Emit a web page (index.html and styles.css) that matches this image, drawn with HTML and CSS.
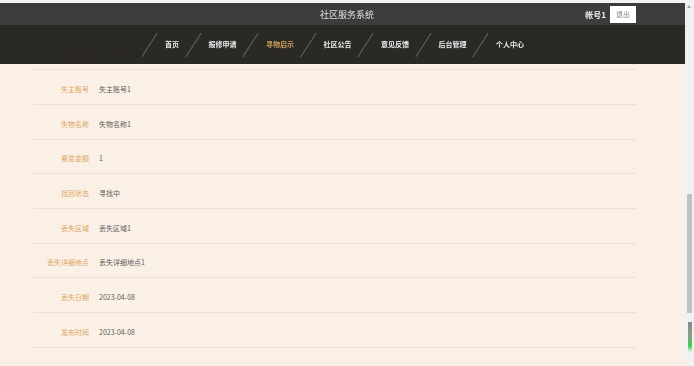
FILE: index.html
```html
<!DOCTYPE html>
<html lang="zh-CN">
<head>
    <meta charset="UTF-8">
    <meta name="viewport" content="width=device-width, initial-scale=1.0">
    <title>社区服务系统 - 寻物启示详情</title>
    <link rel="stylesheet" href="styles.css">
</head>
<body>
    <div class="header">
        <div class="topbar">
            <div class="title">社区服务系统</div>
            <div class="user">
                <span class="user-name">帐号1</span>
                <button class="logout">退出</button>
            </div>
        </div>
        <ul class="nav">
            <li class="nav-item"><a href="#">首页</a></li>
            <li class="nav-item"><a href="#">报修申请</a></li>
            <li class="nav-item active"><a href="#">寻物启示</a></li>
            <li class="nav-item"><a href="#">社区公告</a></li>
            <li class="nav-item"><a href="#">意见反馈</a></li>
            <li class="nav-item"><a href="#">后台管理</a></li>
            <li class="nav-item"><a href="#">个人中心</a></li>
        </ul>
    </div>

    <div class="detail">
        <div class="row"><span class="label">失物编号</span><span class="value">1680933891</span></div>
        <div class="row"><span class="label">联系电话</span><span class="value">11111111111</span></div>
        <div class="row"><span class="label">失主账号</span><span class="value">失主账号1</span></div>
        <div class="row"><span class="label">失物名称</span><span class="value">失物名称1</span></div>
        <div class="row"><span class="label">悬赏金额</span><span class="value">1</span></div>
        <div class="row"><span class="label">找回状态</span><span class="value">寻找中</span></div>
        <div class="row"><span class="label">丢失区域</span><span class="value">丢失区域1</span></div>
        <div class="row"><span class="label">丢失详细地点</span><span class="value">丢失详细地点1</span></div>
        <div class="row"><span class="label">丢失日期</span><span class="value">2023-04-08</span></div>
        <div class="row"><span class="label">发布时间</span><span class="value">2023-04-08</span></div>
    </div>

    <div class="scrollbar">
        <span class="scroll-arrow"></span>
        <span class="scroll-thumb"></span>
        <span class="scroll-meter"></span>
    </div>
</body>
</html>
```

FILE: styles.css
```css
html, body {
    margin: 0;
    overflow: hidden;
}
body {
    font-family: "Noto Sans CJK SC", "Liberation Sans", sans-serif;
    background-color: #fbf0e6;
    width: 685px;
    height: 366px;
}

/* header */
.header {
    position: fixed;
    top: 0;
    left: 0;
    width: 685px;
    border-top: 3px solid #f2f2f2;
    z-index: 2;
}
.topbar {
    display: grid;
    grid-template-columns: 1fr auto 1fr;
    align-items: center;
    height: 22px;
    padding: 0 49px 0 58px;
    background-color: #3c3c3c;
}
.title {
    grid-column: 2;
    color: #e2e2e2;
    font-size: 9px;
}
.user {
    grid-column: 3;
    justify-self: end;
    display: flex;
    align-items: center;
    gap: 4px;
}
.user-name {
    color: #f0f0f0;
    font-size: 8px;
    font-weight: bold;
}
.logout {
    width: 26px;
    height: 17px;
    padding: 0;
    border: none;
    background-color: #fff;
    color: #888;
    font-family: inherit;
    font-size: 7px;
}
.nav {
    display: flex;
    align-items: center;
    height: 39px;
    margin: 0;
    padding: 0 0 0 142px;
    list-style: none;
    background-color: rgba(30, 28, 25, 0.94);
}
.nav-item {
    display: flex;
    align-items: center;
    padding: 0 6.5px 0 7px;
}
.nav-item::before {
    content: "";
    width: 0;
    height: 24px;
    border-left: 1px solid #6e6c69;
    transform: skewX(-33deg);
    margin-right: 15px;
}
.nav-item a {
    color: #ececec;
    font-size: 7px;
    font-weight: bold;
    text-decoration: none;
    line-height: 1;
}
.nav-item.active a {
    color: #cf9f5c;
}

/* detail rows */
.detail {
    width: 603px;
    margin-left: 33px;
    padding-top: 1px;
}
.row {
    display: grid;
    grid-template-columns: 56px 1fr;
    column-gap: 10px;
    align-items: center;
    box-sizing: border-box;
    height: 34.67px;
    padding-top: 4px;
    border-bottom: 1px solid #e9dfd3;
    font-size: 7px;
}
.label {
    text-align: right;
    color: #dba663;
}
.value {
    color: #5c5c5c;
}

/* page scrollbar */
.scrollbar {
    position: fixed;
    top: 0;
    right: 0;
    width: 9px;
    height: 366px;
    background-color: #f1f1f1;
}
.scroll-arrow {
    position: absolute;
    top: 5px;
    left: 2px;
    border-left: 2px solid transparent;
    border-right: 2px solid transparent;
    border-bottom: 3px solid #a3a3a3;
}
.scroll-thumb {
    position: absolute;
    top: 194px;
    left: 2px;
    width: 5px;
    height: 119px;
    background-color: #c1c1c1;
}
.scroll-meter {
    position: absolute;
    top: 322px;
    left: 3px;
    width: 4px;
    height: 30px;
    background: linear-gradient(#8a8a8a, #8f9a8f 45%, #3fce52 80%, #e8f5e8);
}
```
